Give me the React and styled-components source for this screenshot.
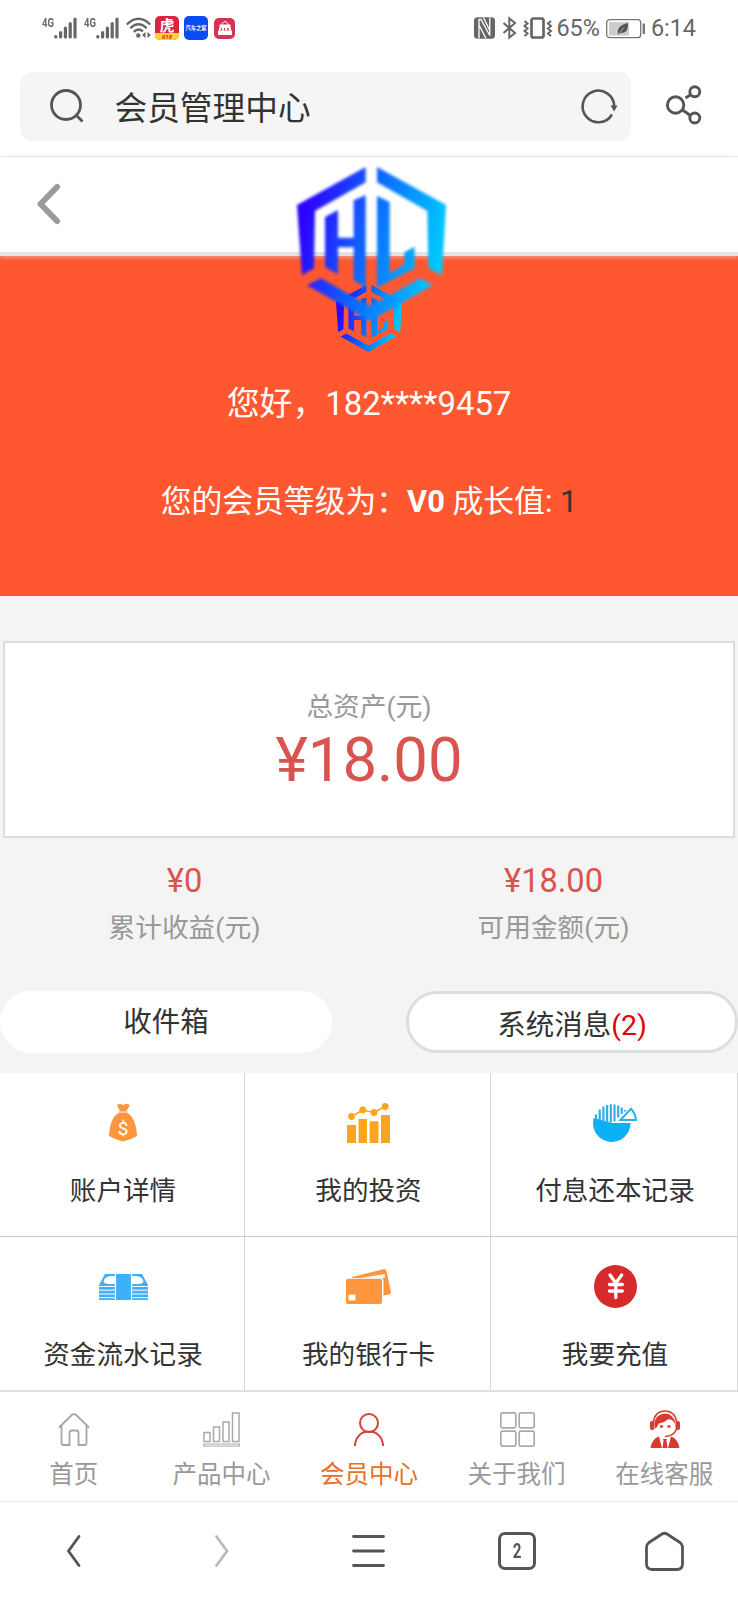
import React from "react";
import styled, { createGlobalStyle } from "styled-components";

const GlobalStyle = createGlobalStyle`
* {
  box-sizing: border-box;
}
body {
  margin: 0;
  background: #fff;
  font-family: Roboto, "Noto Sans CJK SC", sans-serif;
  color: #333;
}
svg {
  display: block;
  overflow: visible;
}
`

const Page = styled.div`
width: 738px;
height: 1600px;
display: flex;
flex-direction: column;
overflow: hidden;
background-color: #f4f4f4;
`

const StatusBar = styled.div`
display: flex;
align-items: center;
justify-content: space-between;
height: 56px;
padding: 0 42px 0 42px;
background-color: #fff;
color: #666;
font-size: 23.4px;
`

const StatusGroup = styled.div`
display: flex;
align-items: center;
`

const StatusText = styled.span`
margin-left: ${props => props.$gap}px;
line-height: 57px;
`

const Signal = styled.div`
display: flex;
width: 35px;
height: 22px;
margin-right: 7px;
font: bold 12.5px/11px "Roboto", sans-serif;
span {
  width: 12px;
  transform: scaleX(0.76);
  transform-origin: left;
  height: 11px;
}
`

const AppIcon = styled.div`
display: flex;
flex-direction: column;
align-items: center;
justify-content: ${props => props.$center ? 'center' : 'flex-start'};
width: ${props => props.$size}px;
height: ${props => props.$size}px;
margin-left: ${props => props.$gap}px;
border-radius: 5px;
background: ${props => props.$bg};
color: #fff;
white-space: nowrap;
font: bold ${props => props.$font}px/17px "Noto Sans CJK SC", sans-serif;
`

const Promo = styled.i`
width: 100%;
height: 7px;
border-radius: 0 0 5px 5px;
text-align: center;
background-color: #ffd335;
color: #d22;
font: italic bold 6px/7px Roboto, sans-serif;
`

const Address = styled.div`
display: flex;
align-items: center;
height: 101px;
padding: 0 36px 0 20px;
border-bottom: 1px solid #eaeaea;
background-color: #fff;
`

const SearchBox = styled.div`
display: flex;
align-items: center;
width: 611px;
height: 69px;
margin-right: 35px;
padding: 0 13px 0 30px;
border-radius: 12px;
background-color: #f5f5f5;
`

const SearchText = styled.div`
flex: 1;
margin-left: 30.5px;
padding-top: 5px;
font-size: 32.7px;
line-height: 64px;
`

const Header = styled.header`
position: relative;
z-index: 1;
flex: none;
height: 99px;
padding: 27px 0 0 37px;
background-color: #fff;
border-bottom: 4px solid #e6e2e1;
box-shadow: 0 1px 5px rgba(225, 215, 210, 0.7);
`

const HeaderLogo = styled.div`
position: absolute;
left: 296.5px;
top: 10px;
filter: blur(1.4px);
`

const Hero = styled.section`
display: flex;
flex-direction: column;
align-items: center;
flex: none;
height: 340px;
padding-top: 29px;
background-color: #ff5730;
color: #fff;
`

const Hello = styled.p`
margin: 27px 0 0;
font-size: 32.9px;
line-height: 50px;
`

const Level = styled.p`
margin: 48px 0 0;
font-size: 30.8px;
line-height: 50px;
span {
  color: #333;
}
`

const Assets = styled.section`
display: flex;
flex-direction: column;
align-items: center;
flex: none;
height: 197px;
margin: 45px 3px 0;
padding-top: 44px;
border: 2px solid #ddd;
background-color: #fff;
`

const Caption = styled.div`
color: #999;
font-size: 26.7px;
line-height: 40px;
`

const Money = styled.div`
color: #d9534f;
font-size: ${props => props.$big ? 61.6 : 32.6}px;
line-height: ${props => props.$big ? 66 : 52}px;
`

const Totals = styled.section`
display: grid;
grid-template-columns: 1fr 1fr;
height: 153px;
padding-top: 17px;
text-align: center;
${Caption} {
  padding-top: 1px;
}
`

const Messages = styled.section`
display: flex;
justify-content: space-between;
height: 82px;
`

const Pill = styled.div`
width: 332px;
height: 62px;
border-radius: 31px;
border: ${props => props.$outlined ? '3px solid #ddd' : 'none'};
background-color: #fff;
text-align: center;
font-size: 28.5px;
line-height: 64px;
span {
  color: #e60000;
}
`

const Menu = styled.section`
display: grid;
grid-template-columns: 245px 246px 247px;
grid-template-rows: 164px 153px;
`

const MenuItem = styled.div`
display: flex;
flex-direction: column;
align-items: center;
padding-left: 2px;
background-color: #fff;
border-right: 1px solid #d6d6d6;
border-bottom: ${props => props.$last ? 'none' : '1px solid #c8c8c8'};
font-size: 26.6px;
`

const MenuIcon = styled.div`
display: flex;
align-items: center;
justify-content: center;
height: 98px;
padding-top: 1px;
`

const MenuLabel = styled.div`
line-height: 40px;
`

const Tabs = styled.nav`
display: grid;
grid-template-columns: repeat(5, 1fr);
flex: none;
height: 112px;
border-top: 2px solid #e0e0e0;
border-bottom: 1px solid #ececec;
background-color: #fff;
`

const Tab = styled.div`
display: flex;
flex-direction: column;
align-items: center;
color: ${props => props.$active ? '#e8702a' : '#999'};
font-size: 24.5px;
line-height: 36px;
`

const TabIcon = styled.div`
display: flex;
align-items: center;
height: 65px;
padding: 9px 0 0 1px;
`

const BrowserBar = styled.div`
display: grid;
grid-template-columns: repeat(5, 1fr);
flex: 1;
align-items: center;
justify-items: center;
background-color: #fff;
`

const WindowCount = styled.div`
width: 38px;
height: 38px;
border: 3px solid #555;
border-radius: 7px;
color: #555;
text-align: center;
font: bold 21px/32px Roboto, sans-serif;
span {
  display: block;
  transform: scaleX(0.72);
}
`

const Logo = ({ id, width, height }) => (
  <svg width={width} height={height} viewBox="80 50 447 462" preserveAspectRatio="none">
    <defs>
      <linearGradient id={id} gradientUnits="userSpaceOnUse" x1="90" y1="230" x2="515" y2="330">
        <stop offset="0" stopColor="#2d00ff" />
        <stop offset="0.5" stopColor="#0a70ff" />
        <stop offset="1" stopColor="#00ccff" />
      </linearGradient>
    </defs>
    <g fill={`url(#${id})`}>
      <path d="M286 50V96L134 182L131 354L95 375L80 164Z" />
      <path d="M320 50L527 164L515 375L474 354L471 182L320 96Z" />
      <path d="M164 200L203 179V262H250V150L286 134V412L250 390V291H203V372L164 350Z" />
      <path d="M320 137L358 155V370L402 342V306L433 289V354L320 412Z" />
      <path d="M110 405L152 384L299 468L450 384L487 405L299 512Z" />
    </g>
  </svg>
)

const SignalIcon = () => (
  <Signal>
    <span>4G</span>
    <svg width="23" height="22" stroke="#666" strokeWidth="3.2" strokeLinecap="round">
      <path d="M1.8 19.5V20M6.6 15.5V20M11.4 11V20M16.2 6.5V20M21 2V20" />
    </svg>
  </Signal>
)

const WifiIcon = () => (
  <svg width="25" height="22" fill="none" stroke="#666" strokeWidth="2.4">
    <path d="M0.8 7.5Q12.5 -4 24.2 7.5M4.3 11.2Q12.5 3.5 20.7 11.2M7.8 14.8Q12.5 10.5 17 14.4" />
    <circle cx="12.3" cy="18.5" r="2.2" fill="#666" stroke="none" />
    <path d="M19.5 15V21L16 18ZM21.5 15V21L25 18Z" fill="#666" stroke="none" />
  </svg>
)

const BagIcon = () => (
  <svg width="16" height="16" fill="none" stroke="#fff">
    <path d="M5 6V4Q8 -1 11 4V6" />
    <path d="M2.5 4.5H13.5V8H2.5ZM1 10.5H15V15H1Z" fill="#fff" stroke="none" />
    <path d="M2 9.2H4M5 9.2H7M8 9.2H10M11.5 9.2H14" strokeWidth="2.4" />
  </svg>
)

const PhoneIcons = () => (
  <svg width="78" height="22" fill="none" stroke="#666" strokeWidth="2">
    <rect x="0" y="0.3" width="21" height="21.4" rx="3.5" fill="#666" stroke="none" />
    <path d="M5 21.5V2.5L7 2.5L15.8 18.5V0.5M5 21.5V8L12 21.5M15.8 0.5V13.5L9.5 0.5" stroke="#fff" strokeWidth="1.3" />
    <path d="M29.5 6L41 16L35.3 20.7V1.3L41 6L29.5 16" strokeWidth="2" />
    <rect x="57.5" y="1.5" width="12" height="19" rx="2" strokeWidth="2.7" />
    <path d="M50.5 4L53.5 6.5L50.5 9L53.5 11.5L50.5 14L53.5 16.5L50.5 19M77 4L74 6.5L77 9L74 11.5L77 14L74 16.5L77 19" />
  </svg>
)

const BatteryIcon = () => (
  <svg width="39" height="57" viewBox="0 -19 39 57" fill="none" stroke="#777" strokeWidth="1.3">
    <rect x="0.7" y="0.7" width="34" height="18" rx="3" />
    <rect x="3" y="3" width="20" height="13.5" fill="#cdcdcd" stroke="none" />
    <path d="M12 15Q10 7 22 4Q23 14 14.5 14L12 16Z" fill="#555" stroke="none" />
    <path d="M12 15.5L18 8.5" stroke="#cdcdcd" strokeWidth="0.7" />
    <path d="M37.8 4.5V15" strokeWidth="2.4" />
  </svg>
)

const SearchIcon = () => (
  <svg width="34" height="34" fill="none" stroke="#555" strokeWidth="2.8">
    <circle cx="16" cy="16" r="14.5" />
    <path d="M26 26L32.5 32.5" />
  </svg>
)

const ReloadIcon = () => (
  <svg width="37" height="34" fill="none" stroke="#555" strokeWidth="2.6">
    <path d="M31 25.5A15.8 15.8 0 1 1 33.2 17" />
    <path d="M29.5 16.5H36.5L33.2 22.5Z" fill="#555" stroke="none" />
  </svg>
)

const ShareIcon = () => (
  <svg width="36" height="42" fill="none" stroke="#555" strokeWidth="2.9">
    <circle cx="9.6" cy="20" r="8.2" />
    <circle cx="28.8" cy="6.8" r="5" />
    <circle cx="28.8" cy="33" r="5" />
    <path d="M19.5 13L25 9.5M16.5 25L24.5 30.5" />
  </svg>
)

const MoneyBag = () => (
  <svg width="28" height="39" fill="#ff953c">
    <path d="M8 2Q11 0 14 2Q20 -1 20.5 3L17 8.5H11Z" />
    <path d="M9.5 9H18.5" stroke="#ffc08a" strokeWidth="1.5" />
    <path d="M9.5 10H18.5Q27 15 28 33Q21 37 14 38.5Q7 37 0 33Q1 15 9.5 10Z" />
    <text x="14" y="31.5" fill="#fff" fontFamily="Roboto, sans-serif" fontSize="19" textAnchor="middle">$</text>
  </svg>
)

const InvestChart = () => (
  <svg width="43" height="40" fill="#fda41f">
    <path d="M0 22H9V40H0ZM11.5 16H20V40H11.5ZM22.7 18.3H31.5V40H22.7ZM34 12H43V40H34Z" />
    <circle cx="4.5" cy="13.5" r="3.4" />
    <circle cx="15.7" cy="7" r="3.4" />
    <circle cx="27" cy="9.5" r="3.4" />
    <circle cx="38.2" cy="3.5" r="3.4" />
    <path d="M4.5 13.5L15.7 7L27 9.5L38.2 3.5" fill="none" stroke="#fda41f" strokeWidth="1.5" />
  </svg>
)

const PieIcon = () => (
  <svg width="44" height="38" fill="none" stroke="#2fb0e8">
    <path d="M0.7 14L19 19H37.6A18.8 18.8 0 1 1 0.7 14Z" fill="#0cb0f5" stroke="none" />
    <path d="M3 10.5V15M6.7 5.5V16M10.4 2.5V17M14.1 1V18M17.8 0.2V18.5M21.5 0.5V17.5M25.2 1.5V13.5M28.7 3.5V10M32 6V7.5" strokeWidth="2.2" />
    <path d="M27.5 16L38 4.7Q42.5 10 43 16Z" strokeWidth="2" />
  </svg>
)

const CashIcon = () => (
  <svg width="49" height="26" fill="#3cb1f8">
    <path d="M6 0H43L49 11V26H0V11Z" />
    <path d="M5 6Q7 1.5 15 2H17V10H11Q3 10 5 6ZM44 6Q42 1.5 34 2H32V10H38Q46 10 44 6Z" fill="#fff" />
    <path d="M0 12.5H16M0 16.2H16M0 20H16M0 23.7H16M33 12.5H49M33 16.2H49M33 20H49M33 23.7H49" stroke="#fff" strokeWidth="1" />
    <path d="M16.5 0V26M32.5 0V26" stroke="#fff" strokeWidth="1.2" />
  </svg>
)

const CardsIcon = () => (
  <svg width="45" height="35" fill="#ff963e">
    <path d="M6 8L38 0Q40 0 40.5 2L45 23Q45 25 43 25.5L37.5 26.5V11Q37 9 35 9L39 8.5L38.5 5L15 9H6Z" />
    <rect y="9.8" width="36" height="25.2" rx="2" />
    <rect x="2.5" y="25.5" width="7" height="6" rx="1" fill="#fff" />
  </svg>
)

const RechargeIcon = () => (
  <svg width="43" height="43" fill="none" stroke="#fff" strokeWidth="3.3" strokeLinecap="round">
    <circle cx="21.5" cy="21.5" r="21.5" fill="#d72b2b" stroke="none" />
    <path d="M16 10L21.8 18L27.7 10M21.8 18V32.5M15.5 19.5H28.3M15.5 26H28.3" />
  </svg>
)

const HomeIcon = () => (
  <svg width="32" height="33" fill="none" stroke="#a5a5a5" strokeWidth="1.8">
    <path d="M1 14.5L14 1.8Q16 0.5 18 1.8L31 14.5M3.5 12V30Q3.5 32 5.5 32H11.5V20Q11.5 17.5 14 17.5H18Q20.5 17.5 20.5 20V32H26.5Q28.5 32 28.5 30V12" />
  </svg>
)

const ProductIcon = () => (
  <svg width="37" height="35" fill="none" stroke="#aaa" strokeWidth="1.5">
    <path d="M1 20.5H7V29.5H1ZM10.5 15H16.5V29.5H10.5ZM20 10H26V29.5H20ZM29.5 1H36V29.5H29.5Z" />
    <rect x="0.5" y="32" width="36" height="2" strokeWidth="1" />
  </svg>
)

const MemberIcon = () => (
  <svg width="30" height="33" fill="none" stroke="#d0443c" strokeWidth="2">
    <circle cx="15" cy="10" r="9" />
    <path d="M1 33C1 25 7 18.8 13 18.8H17C23 18.8 29 25 29 33" />
  </svg>
)

const AboutIcon = () => (
  <svg width="35" height="35" fill="none" stroke="#aaa" strokeWidth="1.7">
    <rect x="0.8" y="0.8" width="15" height="15" rx="1.5" />
    <rect x="19.2" y="0.8" width="15" height="15" rx="1.5" />
    <rect x="0.8" y="19.2" width="15" height="15" rx="1.5" />
    <rect x="19.2" y="19.2" width="15" height="15" rx="1.5" />
  </svg>
)

const ServiceIcon = () => (
  <svg width="30" height="38" fill="#d93a30">
    <path d="M3.5 12Q5 1 15 1Q25 1 26.5 12" fill="none" stroke="#d93a30" strokeWidth="1.6" />
    <path d="M4.5 14Q5 4.5 15 3.5Q24 4 25.5 14L22.5 10.5Q19 8.5 17 10Q14 13 9 13.5L5.5 19Z" />
    <rect x="0" y="11" width="4.5" height="9" rx="2" />
    <rect x="25.5" y="11" width="4.5" height="9" rx="2" />
    <ellipse cx="11.5" cy="16.5" rx="1.8" ry="1.2" />
    <ellipse cx="19" cy="16.5" rx="1.8" ry="1.2" />
    <path d="M26.5 19Q24 26 15 26.5" fill="none" stroke="#d93a30" strokeWidth="1.5" />
    <path d="M0.5 38Q2 28.5 9 26.5L12 38ZM29.5 38Q28 28.5 21 26.5L18 38Z" />
    <path d="M13 29H17L16.5 31L17.5 38H12.5L13.5 31Z" />
  </svg>
)

const ChevronIcon = ({ next }) => (
  <svg width="13" height="32" fill="none" stroke={next ? '#bbb' : '#555'} strokeWidth="2.8" strokeLinecap="round">
    <path d={next ? 'M1.5 1.5L12 16L1.5 30.5' : 'M12 1.5L1.5 16L12 30.5'} />
  </svg>
)

const MenuLines = () => (
  <svg width="33" height="32" stroke="#555" strokeWidth="2.8" strokeLinecap="round">
    <path d="M1.5 1.5H31.5M1.5 16H31.5M1.5 30.5H31.5" />
  </svg>
)

const BrowserHome = () => (
  <svg width="39" height="39" fill="none" stroke="#555" strokeWidth="2.8" strokeLinejoin="round">
    <path d="M17 2Q19.5 0.5 22 2L35 10.5Q37.5 12.5 37.5 15V32Q37.5 37.5 32 37.5H7Q1.5 37.5 1.5 32V15Q1.5 12.5 4 10.5Z" />
  </svg>
)

const menu = [
  { label: '账户详情', icon: <MoneyBag /> },
  { label: '我的投资', icon: <InvestChart /> },
  { label: '付息还本记录', icon: <PieIcon /> },
  { label: '资金流水记录', icon: <CashIcon />, last: true },
  { label: '我的银行卡', icon: <CardsIcon />, last: true },
  { label: '我要充值', icon: <RechargeIcon />, last: true },
]

const tabs = [
  { label: '首页', icon: <HomeIcon /> },
  { label: '产品中心', icon: <ProductIcon /> },
  { label: '会员中心', icon: <MemberIcon />, active: true },
  { label: '关于我们', icon: <AboutIcon /> },
  { label: '在线客服', icon: <ServiceIcon /> },
]

function App() {
  return (
    <Page>
      <GlobalStyle />
      <StatusBar>
        <StatusGroup>
          <SignalIcon />
          <SignalIcon />
          <WifiIcon />
          <AppIcon $size={24} $gap={4} $bg="#dc2340" $font={15}>虎<Promo>618</Promo></AppIcon>
          <AppIcon $size={24} $gap={5} $bg="#0a4bf5" $font={5.3} $center>汽车之家</AppIcon>
          <AppIcon $size={21} $gap={6} $bg="#d23553" $font={6} $center><BagIcon /></AppIcon>
        </StatusGroup>
        <StatusGroup>
          <PhoneIcons />
          <StatusText $gap={4}>65%</StatusText>
          <StatusText $gap={6}><BatteryIcon /></StatusText>
          <StatusText $gap={6}>6:14</StatusText>
        </StatusGroup>
      </StatusBar>
      <Address>
        <SearchBox>
          <SearchIcon />
          <SearchText>会员管理中心</SearchText>
          <ReloadIcon />
        </SearchBox>
        <ShareIcon />
      </Address>
      <Header>
        <svg width="23" height="40" fill="none" stroke="#9b9b9b" strokeWidth="6" strokeLinecap="round" strokeLinejoin="round">
          <path d="M20 3L3.5 20L20 37" />
        </svg>
        <HeaderLogo><Logo id="logoHeader" width={149} height={154} /></HeaderLogo>
      </Header>
      <Hero>
        <Logo id="logoHero" width={66} height={67} />
        <Hello>您好，182****9457</Hello>
        <Level>您的会员等级为：<b>V0</b> 成长值: <span>1</span></Level>
      </Hero>
      <Assets>
        <Caption>总资产(元)</Caption>
        <Money $big>¥18.00</Money>
      </Assets>
      <Totals>
        <div>
          <Money>¥0</Money>
          <Caption>累计收益(元)</Caption>
        </div>
        <div>
          <Money>¥18.00</Money>
          <Caption>可用金额(元)</Caption>
        </div>
      </Totals>
      <Messages>
        <Pill>收件箱</Pill>
        <Pill $outlined>系统消息<span>(2)</span></Pill>
      </Messages>
      <Menu>
        {menu.map(item => (
          <MenuItem key={item.label} $last={item.last}>
            <MenuIcon>{item.icon}</MenuIcon>
            <MenuLabel>{item.label}</MenuLabel>
          </MenuItem>
        ))}
      </Menu>
      <Tabs>
        {tabs.map(tab => (
          <Tab key={tab.label} $active={tab.active}>
            <TabIcon>{tab.icon}</TabIcon>
            {tab.label}
          </Tab>
        ))}
      </Tabs>
      <BrowserBar>
        <ChevronIcon />
        <ChevronIcon next />
        <MenuLines />
        <WindowCount><span>2</span></WindowCount>
        <BrowserHome />
      </BrowserBar>
    </Page>
  )
}

export default App;
